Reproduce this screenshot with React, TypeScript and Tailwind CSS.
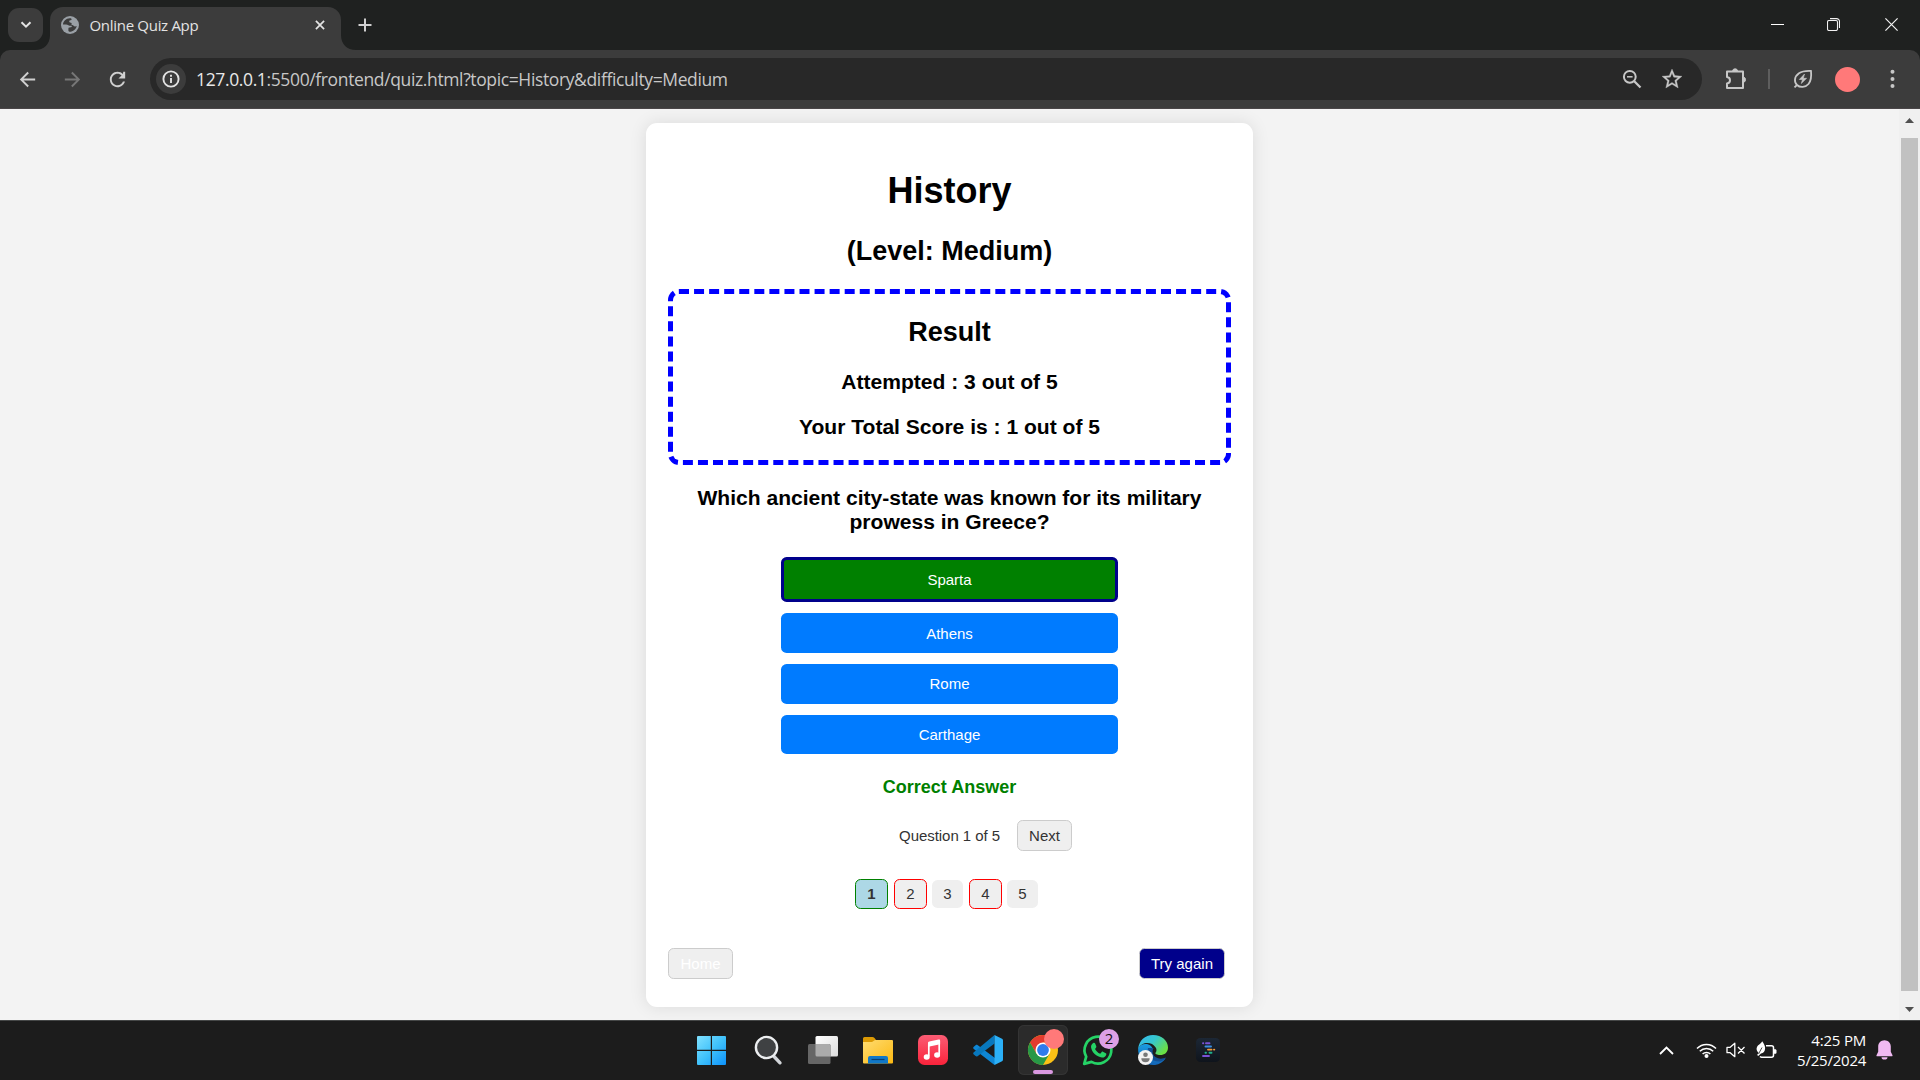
import React from 'react';

const UI = "font-['Open_Sans','Noto_Sans',sans-serif]";

function TabStrip() {
  return (
    <div className="flex h-[50px] items-start bg-[#1f2120] text-[#e3e3e3]">
      <div className="ml-2 mt-2 flex h-[34px] w-[35px] items-center justify-center rounded-[11px] bg-[#3c3c3c]">
        <svg width="12" height="8" viewBox="0 0 12 8" fill="none" stroke="#e3e3e3" strokeWidth="2">
          <path d="M1.5 1.2 6 5.7l4.5-4.5" />
        </svg>
      </div>
      <svg className="-mr-px ml-[-8px] mt-[35px]" width="16" height="15" viewBox="0 0 16 15">
        <path d="M0 15c9 0 15-6 15-15h1v15z" fill="#3c3c3c" />
      </svg>
      <div className="mt-[7px] flex h-[43px] w-[291px] items-center rounded-t-[13px] bg-[#3c3c3c] pb-[7px]">
        <svg className="ml-[11px]" width="18" height="18" viewBox="0 0 18 18">
          <circle cx="9" cy="9" r="9" fill="#9aa0a6" />
          <path
            d="M8.8 2.2C5 2.2 2.1 5.300 2 8.500h3.200c1.600 0 2.100 1.200 3.500 1.200h1.600c.4 0 .7.500.5.900-.5 1-1.600.8-2.400.8-.9 0-1 .7-1 1.400v1.700c0 .5.300 1 1.200 1.200 3.600 0 6.500-2.600 7.100-5.800-1.200.9-2.800.4-3.300-.4-.5-.7-1.600-.3-1.900-1.100-.2-.7.500-1.100 0-1.500-.7-.4-2.200-.1-2.300-1.400 0-.7.600-1.200 1.300-1.200.6 0 1.100-.4 1.100-1 0-.5-.2-.8-.8-1z"
            fill="#3c3c3c"
          />
        </svg>
        <span className={`${UI} ml-[10.500px] whitespace-nowrap text-[15px] leading-5 tracking-[-0.3px]`}>Online Quiz App</span>
        <svg className="ml-auto mr-[16px]" width="10" height="10" viewBox="0 0 11 11" stroke="#e3e3e3" strokeWidth="1.9">
          <path d="m1 1 9 9M10 1l-9 9" />
        </svg>
      </div>
      <svg className="mt-[35px]" width="15" height="15" viewBox="0 0 15 15">
        <path d="M15 15C6 15 0 9 0 0v15z" fill="#3c3c3c" />
      </svg>
      <svg className="ml-[2px] mt-[18px]" width="14" height="14" viewBox="0 0 14 14" stroke="#d0d0d0" strokeWidth="2">
        <path d="M7 .5v13M.5 7h13" />
      </svg>
      <div className="ml-auto mr-[22px] mt-[18px] flex">
        <svg width="13" height="13" viewBox="0 0 13 13" fill="#fff">
          <path d="M0 6h13v1H0z" />
        </svg>
        <svg className="ml-[43px] mr-[45px]" width="13" height="13" viewBox="0 0 13 13" fill="none" stroke="#f2f2f2" strokeWidth="1.1">
          <rect x=".5" y="2.500" width="10" height="10" rx="1.500" />
          <path d="M3 .6h6.500a3 3 0 0 1 3 3V10" />
        </svg>
        <svg width="13" height="13" viewBox="0 0 13 13" stroke="#f2f2f2" strokeWidth="1.2">
          <path d="m.4.400 12.200 12.200M12.600.4.400 12.600" />
        </svg>
      </div>
    </div>
  );
}

const ARROW = 'M20 11H7.830l5.590-5.590L12 4l-8 8 8 8 1.410-1.410L7.830 13H20v-2z';

function Toolbar() {
  return (
    <div className="bg-[#1f2120]">
      <div className="flex h-[59px] items-center rounded-t-[10px] border-b border-[#4a4648] bg-[#3c3c3c]">
        <svg className="ml-[16px]" width="23" height="23" viewBox="0 0 24 24" fill="#d0d0d0">
          <path d={ARROW} />
        </svg>
        <svg className="ml-[22px] rotate-180" width="23" height="23" viewBox="0 0 24 24" fill="#777">
          <path d={ARROW} />
        </svg>
        <svg className="ml-[22px]" width="23" height="23" viewBox="0 0 24 24" fill="#d0d0d0">
          <path d="M17.650 6.350C16.200 4.900 14.210 4 12 4c-4.420 0-7.990 3.580-7.990 8s3.570 8 7.990 8c3.730 0 6.840-2.550 7.730-6h-2.080c-.82 2.330-3.040 4-5.650 4-3.310 0-6-2.690-6-6s2.690-6 6-6c1.660 0 3.140.69 4.220 1.780L13 11h7V4h-2z" />
        </svg>
        <div className="ml-[21px] flex h-[42px] w-[1552px] items-center rounded-full bg-[#282828]">
          <div className="ml-[6px] flex size-[30px] items-center justify-center rounded-full bg-[#3c3c3c]">
            <svg width="18" height="18" viewBox="0 0 18 18" fill="none" stroke="#e3e3e3" strokeWidth="1.900">
              <circle cx="9" cy="9" r="7.600" />
              <path d="M9 8v5M9 4.700v2" />
            </svg>
          </div>
          <span className={`${UI} ml-[10px] whitespace-nowrap text-[17.500px] leading-6 tracking-[-0.37px] text-[#c7c7c7]`}>
            <span className="text-[#e8e8e8]">127.0.0.1</span>:5500/frontend/quiz.html?topic=History&amp;difficulty=Medium
          </span>
          <svg className="ml-auto" width="20" height="20" viewBox="0 0 20 20" fill="none" stroke="#c7c7c7" strokeWidth="2">
            <circle cx="7.800" cy="7.800" r="5.900" />
            <path d="m12 12 6.500 6.500" strokeWidth="2.300" />
            <path d="M5 7.800h5.600" strokeWidth="1.500" />
          </svg>
          <svg className="ml-[18px] mr-[18px]" width="24" height="24" viewBox="0 0 24 24" fill="#c7c7c7" stroke="#c7c7c7" strokeWidth=".3">
            <path d="m22 9.240-7.190-.62L12 2 9.190 8.630 2 9.240l5.460 4.730L5.820 21 12 17.270 18.180 21l-1.630-7.030L22 9.240zM12 15.400l-3.760 2.270 1-4.280-3.320-2.880 4.380-.38L12 6.100l1.710 4.040 4.380.38-3.320 2.880 1 4.280L12 15.400z" />
          </svg>
        </div>
        <svg className="ml-[22px]" width="24" height="24" viewBox="0 0 24 24" fill="none" stroke="#c7c7c7" strokeWidth="2" strokeLinejoin="round">
          <path d="M3 4.500h16v16.500H3v-4.500c4-.5 4-6 0-6.500z" />
          <path d="M8.700 4a2.400 2.200 0 0 1 4.800 0zM19.500 10.300a2 2.400 0 0 1 0 4.800z" fill="#c7c7c7" strokeWidth="1" />
        </svg>
        <div className="ml-[20px] h-5 w-[2px] bg-[#5e5e5e]" />
        <svg className="ml-[23px]" width="20" height="20" viewBox="0 0 20 20" fill="none" stroke="#c7c7c7" strokeWidth="1.800">
          <path d="M18 2c-4.500-.2-9 .2-12 2.300-5 3.500-5 9-2 11.700 3 2.900 8.500 2.600 11.500-1C18.500 11.500 18.500 7 18 2zM4.500 15.500 1.500 18.300" />
          <path d="M11.500 5 6.300 10.500h3.200L8.300 14.500l5.300-5.200h-3.300z" fill="#c7c7c7" strokeWidth=".6" />
        </svg>
        <div className="ml-[22px] size-[25px] rounded-full bg-[#ff7979]" />
        <svg className="ml-[30px]" width="5" height="20" viewBox="0 0 5 20" fill="#c7c7c7">
          <circle cx="2.500" cy="2.800" r="2" />
          <circle cx="2.500" cy="9.900" r="2" />
          <circle cx="2.500" cy="17" r="2" />
        </svg>
      </div>
    </div>
  );
}

function ScrollBar() {
  return (
    <div className="flex w-[21px] flex-col items-center bg-[#f0f0f0]">
      <svg className="mt-[9px]" width="9" height="5" viewBox="0 0 9 5" fill="#505050">
        <path d="M0 5h9L4.500 0z" />
      </svg>
      <div className="mt-[15px] h-[853px] w-[17px] bg-[#c1c1c1]" />
      <svg className="mt-[16px]" width="9" height="5" viewBox="0 0 9 5" fill="#505050">
        <path d="M0 0h9L4.500 5z" />
      </svg>
    </div>
  );
}

const CHOICES = ['Athens', 'Rome', 'Carthage'];

function QuizCard() {
  return (
    <main className="mt-[14px] flex h-[884px] w-[607px] flex-col items-center rounded-[11px] bg-white px-[22px] text-center font-['Liberation_Sans',Arial,sans-serif] shadow-[0_0_17px_rgba(0,0,0,0.1)]">
      <h1 className="mt-[47px] text-[36px] font-bold leading-[41px] text-black">History</h1>
      <h2 className="mt-[25px] text-[27px] font-bold leading-[31px] text-black">(Level: Medium)</h2>
      <section className="mt-[22px] flex h-[176px] w-[563px] flex-col items-center rounded-[11px] border-5 border-dashed border-[#0000ff] text-black">
        <h2 className="mt-[23px] text-[27px] font-bold leading-[31px]">Result</h2>
        <h3 className="mt-[22px] text-[21.060px] font-bold leading-[24px]">Attempted : 3 out of 5</h3>
        <h3 className="mt-[21px] text-[21.060px] font-bold leading-[24px]">Your Total Score is : 1 out of 5</h3>
      </section>
      <h3 className="mt-[21px] w-[540px] text-[21.060px] font-bold leading-[24px] text-black">
        Which ancient city-state was known for its military prowess in Greece?
      </h3>
      <div className="mt-[23px] flex w-[337px] flex-col text-[15px] leading-[17px] text-white">
        <button className="h-[45px] rounded-[5.600px] border-3 border-[#00008b] bg-[#008000]">Sparta</button>
        {CHOICES.map((c) => (
          <button key={c} className="mt-[11.250px] h-[39.500px] rounded-[5.600px] bg-[#007bff]">
            {c}
          </button>
        ))}
      </div>
      <p className="mt-[23px] text-[18px] font-bold leading-[21px] text-[#008000]">Correct Answer</p>
      <div className="mt-[22px] flex h-[31px] items-center self-start pl-[231px] text-[15px] text-[#333]">
        <span className="w-[102px] whitespace-nowrap text-left tracking-[-0.04px]">Question 1 of 5</span>
        <button className="ml-[16px] h-[31px] w-[55px] rounded-[5.600px] border border-[#ccc] bg-[#efefef]">Next</button>
      </div>
      <div className="mt-[28px] flex h-[30px] items-center self-start pl-[187px] text-[15px] text-[#333]">
        <button className="h-[30px] w-[33px] rounded-[5.600px] border border-[#008000] bg-[#add8e6] font-bold">1</button>
        <button className="ml-[6px] h-[30px] w-[33px] rounded-[5.600px] border border-[#ff0000] bg-[#efefef]">2</button>
        <button className="ml-[5px] h-[28px] w-[31px] rounded-[5.600px] bg-[#efefef]">3</button>
        <button className="ml-[6px] h-[30px] w-[33px] rounded-[5.600px] border border-[#ff0000] bg-[#efefef]">4</button>
        <button className="ml-[5px] h-[28px] w-[31px] rounded-[5.600px] bg-[#efefef]">5</button>
      </div>
      <div className="mt-[39px] flex w-full justify-between pr-[6px] text-[15px] text-white">
        <button className="h-[31px] w-[65px] rounded-[5.600px] border border-[#ccc] bg-[#efefef]">Home</button>
        <button className="h-[31px] w-[86px] whitespace-nowrap rounded-[5.600px] border border-[#ccc] bg-[#00008b]">Try again</button>
      </div>
    </main>
  );
}

function Cell({ children, active }: { children: React.ReactNode; active?: boolean }) {
  return (
    <div className="flex w-[55px] justify-center">
      <div className={active ? 'size-[50px] rounded-[6px] bg-[#2b2b2b] ring-1 ring-inset ring-[#343434]' : 'size-[50px]'}>
        <svg width="50" height="50" viewBox="0 0 50 50">
          {children}
        </svg>
      </div>
    </div>
  );
}

function Taskbar() {
  return (
    <footer className="flex h-[60px] border-t border-[#454747] bg-[#1c1c1c] pt-1">
      <div className="ml-[685.500px] flex">
        <Cell>
          <defs>
            <linearGradient id="win" gradientUnits="userSpaceOnUse" x1="10" y1="11" x2="40" y2="41">
              <stop offset="0" stopColor="#82e2ff" />
              <stop offset=".5" stopColor="#3fc1fb" />
              <stop offset="1" stopColor="#0a8ffb" />
            </linearGradient>
          </defs>
          <path
            transform="translate(-1.5 0)"
            d="M10.500 12a1 1 0 0 1 1-1H24.300v13.800H10.500zM25.500 11H38.500a1 1 0 0 1 1 1v12.800h-14zM10.500 26H24.300V40H11.500a1 1 0 0 1-1-1zM25.500 26h14V39a1 1 0 0 1-1 1h-13z"
            fill="url(#win)"
          />
        </Cell>
        <Cell>
          <path d="m31 31.500 6 6.300" stroke="#d2d5d9" strokeWidth="3.400" strokeLinecap="round" />
          <circle cx="23.500" cy="22.500" r="10.600" fill="#3f4143" stroke="#eceef0" strokeWidth="2.400" />
        </Cell>
        <Cell>
          <defs>
            <linearGradient id="tv1" x1="0" y1="0" x2="1" y2="1">
              <stop offset="0" stopColor="#fff" />
              <stop offset="1" stopColor="#dcdcdc" />
            </linearGradient>
          </defs>
          <rect x="17.500" y="11" width="22.500" height="20.500" rx="1.500" fill="url(#tv1)" />
          <rect x="10" y="19" width="22.500" height="20" rx="1.500" fill="#666" />
          <path d="M17.500 19H31a1.500 1.500 0 0 1 1.500 1.500v11H19a1.500 1.500 0 0 1-1.500-1.500z" fill="#ababab" />
        </Cell>
        <Cell>
          <defs>
            <linearGradient id="fold" x1="0" y1="0" x2="1" y2="1">
              <stop offset="0" stopColor="#ffdc71" />
              <stop offset="1" stopColor="#fcb912" />
            </linearGradient>
          </defs>
          <path d="M10 13.500a1.500 1.500 0 0 1 1.500-1.500h8c1.500 0 2 1 3.300 2.800l3 3H10z" fill="#dc9a04" />
          <path d="M10 17h9l3-2h17a1 1 0 0 1 1 1v21.500a1 1 0 0 1-1 1H11a1 1 0 0 1-1-1z" fill="url(#fold)" />
          <path d="M15 38.500V33a2 2 0 0 1 2-2h16a2 2 0 0 1 2 2v5.500z" fill="#1178c8" />
          <path d="M18.500 34.500h13" stroke="#083f73" strokeWidth="1.200" />
        </Cell>
        <Cell>
          <defs>
            <linearGradient id="mus" x1="0" y1="0" x2="0" y2="1">
              <stop offset="0" stopColor="#fb5c74" />
              <stop offset="1" stopColor="#fa233b" />
            </linearGradient>
          </defs>
          <rect x="10" y="10" width="30" height="30" rx="6.500" fill="url(#mus)" />
          <path d="M20.800 31.300V19.200M31.200 29V16" stroke="#fff" strokeWidth="1.700" />
          <path d="M20 18.300c0-1 .4-1.500 1.300-1.700l9.200-2c1.200-.3 1.600.1 1.600 1.200v3.500l-10.500 2.200-1.600.4z" fill="#fff" />
          <ellipse cx="18.700" cy="32" rx="3" ry="2.700" fill="#fff" />
          <ellipse cx="29.100" cy="30" rx="3" ry="2.700" fill="#fff" />
        </Cell>
        <Cell>
          <path d="M31.500 40 10.800 24c-.8-.7-.8-1.500 0-2.200l1.800-1.600c.6-.5 1.300-.5 1.900-.1L34 34.500z" fill="#0e86d4" />
          <path d="M31.500 10.100v8.400L14.500 31.200c-.6.400-1.300.4-1.900-.1l-1.800-1.600c-.8-.7-.8-1.500 0-2.200z" fill="#0878be" />
          <path d="m31.500 10.100 7 3.300c.9.400 1.500 1 1.500 2v19.200c0 1-.6 1.600-1.500 2l-7 3.300z" fill="#2bb0f7" />
        </Cell>
        <Cell active>
          <circle cx="25" cy="25" r="15" fill="#fbc116" />
          <path d="M25 17.500h13A15 15 0 0 0 12 17.500l6.500 11.300z" fill="#e33b2e" />
          <path d="M18.500 28.800 12 17.500A15 15 0 0 0 25 40l6.500-11.200z" fill="#279847" />
          <circle cx="25" cy="25" r="7.500" fill="#fff" />
          <circle cx="25" cy="25" r="5.900" fill="#2f7bed" />
          <circle cx="36" cy="14" r="10" fill="#ff7979" />
          <rect x="15" y="45" width="20" height="4" rx="2" fill="#d998e0" />
        </Cell>
        <Cell>
          <path d="M11.200 38.900 13.200 31.600A13.400 13.400 0 1 1 18.500 36.900z" fill="none" stroke="#25d366" strokeWidth="2.700" strokeLinejoin="round" />
          <path d="M20.300 18c.5-.4 1.400-.4 1.700.3l1.300 3c.2.500 0 1-.3 1.400l-1 1.200c1.300 2.300 2.800 3.700 5.200 4.800l1.500-1.700c.3-.4.700-.5 1.200-.3l2.900 1.500c.5.200.7.600.5 1.200-.4 2-2.300 3.200-4.300 3.100-5.500-.5-10.500-5.500-11-10.500 0-1.600.9-3.100 2.300-4z" fill="#25d366" />
          <circle cx="36" cy="14" r="10" fill="#dda0e6" />
          <text x="36" y="19.400" textAnchor="middle" fontSize="15" fill="#111" className={UI}>
            2
          </text>
        </Cell>
        <Cell>
          <defs>
            <linearGradient id="edg" x1="0" y1="0" x2="1" y2=".6">
              <stop offset="0" stopColor="#35b8f0" />
              <stop offset=".5" stopColor="#36c7cf" />
              <stop offset="1" stopColor="#6be044" />
            </linearGradient>
            <linearGradient id="edb" x1="0" y1="0" x2="0" y2="1">
              <stop offset="0" stopColor="#1b9de2" />
              <stop offset="1" stopColor="#1263b4" />
            </linearGradient>
          </defs>
          <path d="M10.200 23A15 15 0 0 0 27 39.900c4.500-.6 8.200-3 10.700-6.700-4.500 2-9 1.500-12-1-3-2.600-3-6-1.200-8.700-1-5-10.500-7-14.300-.5z" fill="url(#edb)" />
          <path d="M20 23c-2 9 3 14 12.500 13.500 2.400-.8 4-2 5.500-4-6 2.600-11.500.5-13-3.500-.8-2.300-.4-4 .5-6z" fill="#134f93" />
          <path d="M10.100 24C11 15.500 17 10 25 10c9 0 15 6 15 12.500 0 5-3.500 7.500-8 7.500-3 0-5.200-1-4.500-2.200 1.500-1.800 1.200-4 0-5.600-3.500-5.700-14-6-17.400 1.800z" fill="url(#edg)" />
          <circle cx="17.500" cy="32.500" r="7.500" fill="#f3f3f3" />
          <circle cx="17.500" cy="29.800" r="2.300" fill="#787878" />
          <path d="M13.300 33.300h8.400c0 2.600-1.500 4-4.200 4s-4.200-1.400-4.200-4z" fill="#787878" />
        </Cell>
        <Cell>
          <defs>
            <linearGradient id="dw" x1="0" y1="0" x2="0" y2="1">
              <stop offset="0" stopColor="#1c2735" />
              <stop offset="1" stopColor="#0f141c" />
            </linearGradient>
          </defs>
          <rect x="13" y="13" width="24" height="24" rx="4.500" fill="url(#dw)" />
          <g strokeWidth="1.900" strokeLinecap="round">
            <path d="M20 18.300h.3M23 18.300h3.500" stroke="#7a52d6" />
            <path d="M22.500 21.500h5.500" stroke="#3b8de0" />
            <path d="M25 24.600h3.500M31 24.600h.3" stroke="#f29a3a" />
            <path d="M22.500 27.800h.5M26.500 27.800h2" stroke="#20b08c" />
            <path d="M20 31h6" stroke="#7a52d6" />
          </g>
        </Cell>
      </div>
      <div className="ml-auto flex items-center pb-[5px]">
        <svg className="mr-[22px]" width="15" height="9" viewBox="0 0 15 9" fill="none" stroke="#fff" strokeWidth="1.800">
          <path d="m1 8 6.500-6.500L14 8" />
        </svg>
        <svg className="mr-[9px]" width="21" height="16" viewBox="0 0 21 16" fill="none" stroke="#fff" strokeWidth="1.500">
          <path d="M1 6.500a13.200 13.200 0 0 1 19 0M3.800 9.300a9.400 9.400 0 0 1 13.400 0M6.600 12a5.500 5.500 0 0 1 7.800 0" />
          <circle cx="10.500" cy="14" r="2" fill="#fff" stroke="none" />
        </svg>
        <svg className="mr-[10px]" width="20" height="16" viewBox="0 0 20 16" fill="none" stroke="#fff" strokeWidth="1.300" strokeLinejoin="round">
          <path d="M1 5.300h3.200L8.800 1.300v13.400l-4.600-4H1zM12 5l6.500 6.500M18.500 5 12 11.500" />
        </svg>
        <svg className="mr-[20px]" width="21" height="18" viewBox="0 0 21 18">
          <path d="M10 4.800h5.500a2 2 0 0 1 2 2v7.400a2 2 0 0 1-2 2H5.500l-1.700-.6" fill="none" stroke="#fff" strokeWidth="1.500" />
          <path d="M18 8.200h1.200c.8 0 1.300.6 1.300 1.300v2c0 .8-.5 1.300-1.300 1.300H18z" fill="#fff" />
          <path d="M6.200.2c1.800 2.500 3 4.600 2.900 7.200C9 10.200 7.400 12 5 12.600L2.200 15l-1-1 1.300-2.200C-.3 9.300.3 6 2.200 4.200 3.600 3 5.400 2.300 6.200.2z" fill="#fff" />
          <path d="M2.500 13 6 6.500" stroke="#1c1c1c" strokeWidth=".8" />
        </svg>
        <div className={`${UI} w-[69px] whitespace-nowrap text-right text-[15px] leading-[20px] tracking-[-0.2px] text-white`}>
          <div>4:25 PM</div>
          <div>5/25/2024</div>
        </div>
        <svg className="ml-[10px] mr-[27px]" width="17" height="20" viewBox="0 0 17 20" fill="#f0baf2">
          <path d="M8.500.3c3.600 0 6.300 2.800 6.300 6.300v5.200l1.700 3.400c.2.500-.1 1-.7 1H1.200c-.6 0-.9-.5-.7-1l1.700-3.400V6.600C2.200 3.100 4.900.3 8.500.3zM5.500 17.200h6a3 2.300 0 0 1-6 0z" />
        </svg>
      </div>
    </footer>
  );
}

export default function App() {
  return (
    <div className="flex h-[1080px] w-[1920px] flex-col overflow-hidden bg-[#f3f3f3]">
      <TabStrip />
      <Toolbar />
      <div className="flex h-[911px]">
        <div className="flex flex-1 justify-center">
          <QuizCard />
        </div>
        <ScrollBar />
      </div>
      <Taskbar />
    </div>
  );
}
